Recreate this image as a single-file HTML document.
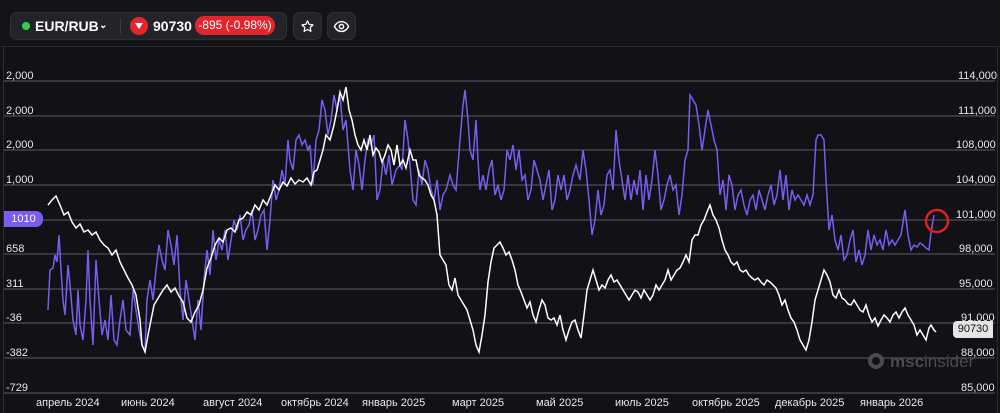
<!DOCTYPE html>
<html><head><meta charset="utf-8"><style>
body{margin:0;width:1000px;height:413px;background:#111116;overflow:hidden;font-family:"Liberation Sans",sans-serif;position:relative}
.top{position:absolute;left:0;top:0;width:1000px;height:46px;background:#141418;border-bottom:1px solid #2a2a30}
.pill{position:absolute;top:12px;height:28px;background:#23232a;border:1px solid #2e2e36;border-radius:7px;box-sizing:border-box}
.t{position:absolute;color:#fff;font-weight:bold;font-size:14px;top:18px}
.lab{position:absolute;color:#e8e8ea;font-size:11px}
.frame{position:absolute;left:3px;top:46px;width:993px;height:367px;border-left:1px solid #2c2c33;border-right:1px solid #2c2c33}
</style></head><body>
<div class="top"></div>
<div class="pill" style="left:10px;width:277px"></div>
<div style="position:absolute;left:22px;top:22px;width:8px;height:8px;border-radius:50%;background:#2fd05a"></div>
<div class="t" style="left:35px">EUR/RUB</div>
<div class="t" style="left:99px;font-size:10px;top:20px">⌄</div>
<div style="position:absolute;left:120px;top:18px;width:1px;height:16px;background:#3a3a42"></div>
<div style="position:absolute;left:130px;top:17px;width:18px;height:18px;border-radius:50%;background:#e3262b"></div>
<svg style="position:absolute;left:134px;top:22px" width="10" height="8"><path d="M1 1L9 1L5 7Z" fill="#fff"/></svg>
<div class="t" style="left:153px;font-size:14px;top:18px">90730</div>
<div style="position:absolute;left:195px;top:16px;width:80px;height:19px;border-radius:9px;background:#e3262b;color:#fff;font-size:12px;line-height:19px;text-align:center">-895 (-0.98%)</div>
<div class="pill" style="left:293px;width:29px"></div>
<svg style="position:absolute;left:300px;top:19px" width="15" height="15" viewBox="0 0 24 24"><path d="M12 3l2.7 5.6 6.1.8-4.5 4.2 1.1 6.1L12 16.8 6.6 19.7l1.1-6.1L3.2 9.4l6.1-.8z" fill="none" stroke="#fff" stroke-width="2" stroke-linejoin="round"/></svg>
<div class="pill" style="left:327px;width:29px"></div>
<svg style="position:absolute;left:333px;top:19px" width="17" height="15" viewBox="0 0 24 20"><path d="M2 10C5 4 9 3 12 3s7 1 10 7c-3 6-7 7-10 7S5 16 2 10z" fill="none" stroke="#fff" stroke-width="2"/><circle cx="12" cy="10" r="3" fill="none" stroke="#fff" stroke-width="2"/></svg>
<div class="frame"></div>
<svg style="position:absolute;left:0;top:0" width="1000" height="413">
<g stroke="#44444c" stroke-width="1.5">
<line x1="4" y1="81" x2="995" y2="81"/><line x1="4" y1="116" x2="995" y2="116"/><line x1="4" y1="150" x2="995" y2="150"/><line x1="4" y1="185" x2="995" y2="185"/><line x1="4" y1="220" x2="995" y2="220"/><line x1="4" y1="254" x2="995" y2="254"/><line x1="4" y1="289" x2="995" y2="289"/><line x1="4" y1="323" x2="995" y2="323"/><line x1="4" y1="358" x2="995" y2="358"/><line x1="4" y1="393" x2="995" y2="393"/>
</g>
<polyline fill="none" stroke="#7a5cf0" stroke-width="1.5" points="48,310 50,270 53,268 55,255 57,262 59,235 61,270 63,300 65,315 68,265 70,285 73,320 76,335 78,290 80,325 83,340 86,300 88,250 90,300 93,345 96,260 99,300 102,335 105,320 108,340 111,295 114,340 117,345 120,320 123,300 126,330 130,335 133,290 136,310 139,330 142,345 145,350 147,300 150,280 153,300 156,270 159,245 162,260 165,270 168,230 171,245 174,265 177,235 180,290 183,320 186,280 189,300 192,320 195,340 198,300 201,330 204,280 207,250 210,275 213,230 216,260 219,240 222,250 225,230 228,260 231,240 234,220 237,230 240,215 243,240 246,230 249,225 252,210 255,240 258,230 261,215 264,210 267,250 270,220 273,180 276,200 279,190 282,170 285,185 288,140 290,160 293,170 296,140 299,135 302,145 305,140 308,150 310,145 313,185 316,140 319,130 322,100 325,110 328,135 331,120 334,95 337,110 340,95 343,130 346,120 350,170 353,190 356,150 359,165 362,190 365,160 368,140 371,145 374,135 377,200 380,190 383,160 386,175 389,155 392,185 396,170 400,165 402,170 405,120 408,140 410,165 413,200 416,205 419,170 422,185 425,160 428,170 431,190 434,200 437,180 440,210 443,195 446,190 450,175 453,185 456,190 460,140 463,105 465,90 468,120 470,150 473,160 476,120 478,160 480,190 483,175 486,190 489,170 492,160 495,195 498,185 501,200 504,190 507,150 510,160 513,145 516,170 519,150 522,180 525,175 528,200 531,190 534,160 537,170 540,180 543,200 546,185 549,170 552,210 555,200 558,175 561,190 564,175 567,200 570,190 573,175 576,165 580,180 583,150 586,170 589,200 592,235 595,220 598,190 601,215 604,205 607,175 610,170 613,190 616,130 619,160 622,180 625,200 628,175 631,200 634,180 637,195 640,170 643,210 646,175 649,200 652,180 655,150 658,175 661,210 664,200 667,185 670,175 673,190 676,185 679,215 682,195 685,160 688,150 690,95 693,100 696,105 699,125 702,150 705,130 708,110 711,125 714,140 717,150 720,195 723,180 726,210 729,175 732,185 735,210 738,195 741,190 744,205 747,215 750,200 753,195 756,210 759,190 762,200 765,210 768,195 771,185 774,205 777,195 780,170 783,200 786,175 789,210 792,190 795,200 798,195 801,200 804,205 807,195 810,205 813,195 816,140 818,135 821,135 824,140 826,180 829,230 832,215 835,240 838,250 841,235 844,260 847,255 850,240 853,230 856,262 859,250 862,265 865,255 868,230 871,250 874,235 877,245 880,240 883,250 886,230 889,245 892,240 895,245 898,240 901,235 905,210 908,235 911,250 914,245 917,247 920,243 923,245 926,248 929,250 931,233 934,215"/>
<polyline fill="none" stroke="#ffffff" stroke-width="1.5" points="48,205 52,200 56,196 60,205 64,215 68,212 72,222 76,228 80,224 84,232 88,230 92,235 96,232 100,240 104,245 108,248 112,255 116,250 120,262 124,270 128,278 132,285 136,295 140,320 142,345 145,352 148,335 151,320 154,305 157,300 160,295 163,290 167,285 171,292 175,288 179,296 183,302 187,318 191,322 195,312 199,305 203,290 207,268 211,258 215,245 219,238 223,242 227,230 231,228 235,232 239,220 243,218 247,212 251,215 255,205 259,210 263,200 267,205 271,195 275,185 279,190 283,182 287,186 291,178 295,184 299,180 303,182 307,178 311,185 314,172 317,170 320,160 323,150 326,135 330,140 334,125 337,110 340,92 343,100 346,87 349,110 352,120 355,135 358,145 361,150 364,140 367,150 370,135 373,155 376,148 379,152 382,162 385,155 388,145 391,150 394,165 397,145 400,165 403,160 406,168 410,150 413,160 416,160 419,175 422,178 425,180 428,185 431,195 434,200 437,215 440,255 443,260 446,265 449,285 452,290 455,278 458,295 461,300 464,305 467,310 470,320 473,330 476,345 479,352 482,335 485,315 488,282 491,262 494,248 497,245 500,242 503,248 506,255 509,252 512,260 515,270 518,285 521,292 524,300 527,308 530,302 533,315 536,322 539,310 542,300 545,305 548,318 551,320 554,318 557,325 560,315 563,330 566,340 569,330 572,322 575,320 578,330 581,338 584,315 587,290 590,280 593,270 596,280 599,290 602,285 605,288 608,280 611,275 614,282 617,280 620,285 623,290 626,295 629,300 632,295 635,290 638,292 641,298 644,290 647,295 650,300 653,295 656,285 659,290 662,285 665,280 668,270 671,280 674,275 677,270 680,268 683,262 686,255 689,262 692,240 695,235 698,235 701,225 704,220 707,212 710,205 713,215 716,220 719,228 722,240 725,250 728,255 731,262 734,265 737,262 740,270 743,272 746,270 749,275 752,278 755,280 758,278 761,282 764,285 767,280 770,282 773,285 776,288 779,295 782,305 785,300 788,310 791,318 794,322 797,330 800,340 803,345 806,350 809,340 812,322 815,300 818,290 821,280 824,270 827,275 830,282 833,295 836,298 839,290 842,298 845,300 848,304 851,305 854,300 857,305 860,310 863,312 866,305 869,315 872,322 875,318 878,326 881,320 884,315 887,318 890,322 893,315 896,312 899,318 902,312 905,308 908,315 911,320 914,325 917,335 920,330 923,335 926,340 929,328 931,325 934,330 936,332"/>
<circle cx="937" cy="221" r="11" fill="none" stroke="#e02020" stroke-width="2.5"/>
<g fill="#4a4a52"><circle cx="876" cy="361" r="8"/></g>
<circle cx="876" cy="361" r="4" fill="#111116"/>
<text x="890" y="367" fill="#4a4a52" font-size="17" font-family="Liberation Sans" font-weight="bold">msc<tspan font-weight="normal">insider</tspan></text>
</svg>
<div class="lab" style="left:6px;top:70px">2,000</div>
<div class="lab" style="left:6px;top:105px">2,000</div>
<div class="lab" style="left:6px;top:139px">2,000</div>
<div class="lab" style="left:6px;top:174px">1,000</div>
<div class="lab" style="left:6px;top:243px">658</div>
<div class="lab" style="left:6px;top:278px">311</div>
<div class="lab" style="left:6px;top:312px">-36</div>
<div class="lab" style="left:6px;top:347px">-382</div>
<div class="lab" style="left:6px;top:382px">-729</div>
<div style="position:absolute;left:4px;top:211px;width:39px;height:16px;background:#7a5cf0;border-radius:0 7px 7px 0;color:#fff;font-size:11px;line-height:16px;text-align:center">1010</div>
<div class="lab" style="left:958px;top:70px">114,000</div>
<div class="lab" style="left:958px;top:105px">111,000</div>
<div class="lab" style="left:956px;top:139px">108,000</div>
<div class="lab" style="left:956px;top:174px">104,000</div>
<div class="lab" style="left:956px;top:209px">101,000</div>
<div class="lab" style="left:959px;top:243px">98,000</div>
<div class="lab" style="left:959px;top:278px">95,000</div>
<div class="lab" style="left:961px;top:312px">91,000</div>
<div class="lab" style="left:961px;top:347px">88,000</div>
<div class="lab" style="left:961px;top:382px">85,000</div>
<div style="position:absolute;left:953px;top:321px;width:40px;height:17px;background:#e4e4e6;border-radius:4px 0 0 4px;color:#111;font-size:11px;line-height:17px;text-align:center">90730</div>
<div class="lab" style="left:36px;top:397px">апрель 2024</div>
<div class="lab" style="left:121px;top:397px">июнь 2024</div>
<div class="lab" style="left:203px;top:397px">август 2024</div>
<div class="lab" style="left:281px;top:397px">октябрь 2024</div>
<div class="lab" style="left:362px;top:397px">январь 2025</div>
<div class="lab" style="left:452px;top:397px">март 2025</div>
<div class="lab" style="left:536px;top:397px">май 2025</div>
<div class="lab" style="left:615px;top:397px">июль 2025</div>
<div class="lab" style="left:692px;top:397px">октябрь 2025</div>
<div class="lab" style="left:775px;top:397px">декабрь 2025</div>
<div class="lab" style="left:860px;top:397px">январь 2026</div>
</body></html>
